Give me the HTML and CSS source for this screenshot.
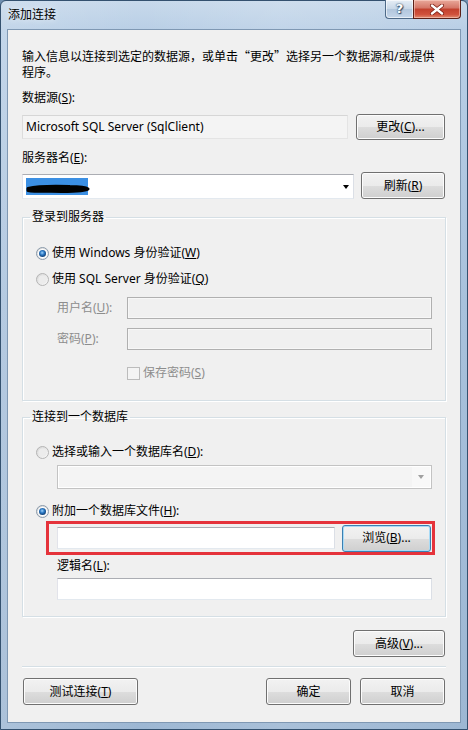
FILE: index.html
```html
<!DOCTYPE html>
<html lang="zh-CN">
<head>
    <meta charset="UTF-8">
    <title>添加连接</title>
    <link rel="stylesheet" href="styles.css">
</head>
<body>
    <!-- 整个对话框窗口 -->
    <div class="window">
        <!-- 标题栏 -->
        <div class="titlebar">
            <span class="title">添加连接</span>
            <div class="caption">
                <span class="cap-help">?</span>
                <span class="cap-close">
                    <svg width="16" height="11" viewBox="0 0 16 11">
                        <path d="M3 1.5 L13 9.5 M13 1.5 L3 9.5" stroke="#7a1d12" stroke-width="4" stroke-linecap="round"/>
                        <path d="M3 1.5 L13 9.5 M13 1.5 L3 9.5" stroke="#fff" stroke-width="2.4" stroke-linecap="round"/>
                    </svg>
                </span>
            </div>
        </div>

        <!-- 客户区 -->
        <div class="client">
            <svg class="defs" width="0" height="0">
                <defs>
                    <linearGradient id="rb-bg" x1="0" y1="0" x2="1" y2="1">
                        <stop offset="0" stop-color="#d6d6d6"/>
                        <stop offset="1" stop-color="#fbfbfb"/>
                    </linearGradient>
                    <radialGradient id="rb-dot" cx="0.45" cy="0.4" r="0.6">
                        <stop offset="0" stop-color="#9fd3fb"/>
                        <stop offset="0.5" stop-color="#2a78c4"/>
                        <stop offset="1" stop-color="#123f73"/>
                    </radialGradient>
                </defs>
            </svg>

            <p class="intro">输入信息以连接到选定的数据源，或单击<span class="cjk">“</span>更改<span class="cjk">”</span>选择另一个数据源和/或提供<br>程序。</p>

            <div class="label lbl-ds">数据源(<u>S</u>):</div>
            <div class="row row-ds">
                <div class="textbox readonly ds-box">Microsoft SQL Server (SqlClient)</div>
                <button class="btn btn-change">更改(<u>C</u>)...</button>
            </div>

            <div class="label lbl-server">服务器名(<u>E</u>):</div>
            <div class="row row-server">
                <div class="combo server-combo">
                    <svg class="scribble" width="68" height="20" viewBox="0 0 68 20">
                        <rect x="2" y="1" width="62" height="17" fill="#3b8fe3"/>
                        <path d="M4 11.5 C14 9 32 9 46 9.5 C56 9.5 62 10.5 64 12 C62 14 52 14.5 38 14.5 C24 14 12 15 4 13.5 Z" fill="#000" stroke="#000" stroke-width="3" stroke-linejoin="round"/>
                    </svg>
                    <span class="arrow"></span>
                </div>
                <button class="btn btn-refresh">刷新(<u>R</u>)</button>
            </div>

            <!-- 登录到服务器 -->
            <fieldset class="group group-login">
                <legend>登录到服务器</legend>
                <div class="group-body login-body">
                    <div class="radio-row r-win">
                        <svg class="radio" width="13" height="13" viewBox="0 0 13 13">
                            <circle cx="6.5" cy="6.5" r="6" fill="url(#rb-bg)" stroke="#8a9aaa"/>
                            <circle cx="6.5" cy="6.5" r="4.6" fill="#fff"/>
                            <circle cx="6.5" cy="6.5" r="3.5" fill="url(#rb-dot)"/>
                        </svg>
                        <span>使用 Windows 身份验证(<u>W</u>)</span>
                    </div>
                    <div class="radio-row r-sql">
                        <svg class="radio" width="13" height="13" viewBox="0 0 13 13">
                            <circle cx="6.5" cy="6.5" r="6" fill="url(#rb-bg)" stroke="#b4b4b4"/>
                            <circle cx="6.5" cy="6.5" r="4" fill="#ececec"/>
                        </svg>
                        <span>使用 SQL Server 身份验证(<u>Q</u>)</span>
                    </div>
                    <div class="field-row r-user">
                        <span class="field-label disabled">用户名(<u>U</u>):</span>
                        <div class="textbox disabled-box"></div>
                    </div>
                    <div class="field-row r-pwd">
                        <span class="field-label disabled">密码(<u>P</u>):</span>
                        <div class="textbox disabled-box"></div>
                    </div>
                    <div class="check-row">
                        <span class="checkbox"></span>
                        <span class="disabled">保存密码(<u>S</u>)</span>
                    </div>
                </div>
            </fieldset>

            <!-- 连接到一个数据库 -->
            <fieldset class="group group-db">
                <legend>连接到一个数据库</legend>
                <div class="group-body db-body">
                    <div class="radio-row r-dbname">
                        <svg class="radio" width="13" height="13" viewBox="0 0 13 13">
                            <circle cx="6.5" cy="6.5" r="6" fill="url(#rb-bg)" stroke="#b4b4b4"/>
                            <circle cx="6.5" cy="6.5" r="4" fill="#ececec"/>
                        </svg>
                        <span>选择或输入一个数据库名(<u>D</u>):</span>
                    </div>
                    <div class="combo db-combo">
                        <span class="drop-area"><span class="arrow grey"></span></span>
                    </div>
                    <div class="radio-row r-attach">
                        <svg class="radio" width="13" height="13" viewBox="0 0 13 13">
                            <circle cx="6.5" cy="6.5" r="6" fill="url(#rb-bg)" stroke="#8a9aaa"/>
                            <circle cx="6.5" cy="6.5" r="4.6" fill="#fff"/>
                            <circle cx="6.5" cy="6.5" r="3.5" fill="url(#rb-dot)"/>
                        </svg>
                        <span>附加一个数据库文件(<u>H</u>):</span>
                    </div>
                    <div class="highlight">
                        <div class="textbox file-box"></div>
                        <button class="btn btn-browse">浏览(<u>B</u>)...</button>
                    </div>
                    <div class="label lbl-logic">逻辑名(<u>L</u>):</div>
                    <div class="textbox logic-box"></div>
                </div>
            </fieldset>

            <div class="row row-adv">
                <button class="btn btn-adv">高级(<u>V</u>)...</button>
            </div>

            <div class="separator"></div>

            <div class="row row-bottom">
                <button class="btn btn-test">测试连接(<u>T</u>)</button>
                <button class="btn btn-ok">确定</button>
                <button class="btn btn-cancel">取消</button>
            </div>
        </div>
    </div>
</body>
</html>
```

FILE: styles.css
```css
*{
    margin: 0;
    padding: 0;
    box-sizing: border-box;
}
body{
    width: 468px;
    height: 730px;
    overflow: hidden;
    font: 12px/16px "Noto Sans", "Noto Sans CJK SC", sans-serif;
    color: #000;
    background: #6f8fb0;
}
u{
    text-decoration: underline;
    text-underline-offset: 1px;
}
/* 中文引号用全角字体 */
.cjk{
    font-family: "Noto Sans CJK SC", sans-serif;
}
/* 窗口外框 (Aero 玻璃) */
.window{
    height: 730px;
    display: flex;
    flex-direction: column;
    border: 1px solid #34516f;
    border-radius: 6px 6px 0 0;
    background: linear-gradient(90deg, rgba(255,255,255,0.15), rgba(255,255,255,0) 30%, rgba(255,255,255,0.12) 60%, rgba(255,255,255,0) 100%),
                linear-gradient(180deg, #c7d9eb 0, #b9cfe6 28px, #a8c1dc 300px, #9db7d3 730px);
}
.titlebar{
    height: 28px;
    display: flex;
    align-items: flex-start;
    justify-content: space-between;
}
.title{
    padding: 6px 0 0 7px;
    line-height: 16px;
    text-shadow: 0 0 6px rgba(255,255,255,0.9);
}
.caption{
    display: flex;
    margin-right: 6px;
    margin-top: -1px;
}
.cap-help, .cap-close{
    height: 19px;
    display: flex;
    align-items: center;
    justify-content: center;
    border: 1px solid #4e6a88;
    border-top: 0;
}
.cap-help{
    width: 28px;
    border-radius: 0 0 0 4px;
    border-right: 0;
    background: linear-gradient(180deg, #e6eef6 0, #c8d7e7 50%, #b2c6dc 51%, #c4d6ea 100%);
    box-shadow: inset 0 0 0 1px rgba(255,255,255,0.6);
    font: bold 13px/16px "DejaVu Sans", sans-serif;
    color: #fff;
    text-shadow: 0 0 1px #354f6b, 0 0 2px #354f6b, 1px 1px 1px #354f6b;
}
.cap-close{
    width: 48px;
    border-radius: 0 0 4px 0;
    border-color: #5b2018;
    background: linear-gradient(180deg, #e9a99b 0, #d47566 45%, #c2402d 50%, #d0513c 80%, #e08b70 100%);
    box-shadow: inset 0 0 0 1px rgba(255,220,210,0.5);
}
/* 客户区 */
.client{
    flex: 1;
    margin: 0 6px 6px 6px;
    border: 1px solid #7f98b3;
    background: #f0f0f0;
    padding: 18px 14px 0 14px;
}
.defs{
    position: absolute;
}
.intro{
    line-height: 16px;
}
.label{
    line-height: 16px;
}
.lbl-ds{
    margin-top: 9px;
}
.row{
    display: flex;
    align-items: center;
}
.row-ds{
    margin-top: 8px;
    height: 26px;
    gap: 8px;
}
.lbl-server{
    margin-top: 10px;
}
.row-server{
    margin-top: 6px;
    height: 27px;
    gap: 7px;
    align-items: flex-end;
}
/* 文本框 */
.textbox{
    background: #fff;
    border: 1px solid;
    border-color: #abadb3 #dbdfe6 #e3e9ef #e2e3ea;
    height: 22px;
}
.readonly{
    background: #f4f4f4;
    border-color: #d6d6d6 #e4e4e4 #e4e4e4 #dcdcdc;
    padding: 3px 0 0 3px;
}
.ds-box{
    width: 326px;
    height: 24px;
    line-height: 16px;
}
.disabled-box{
    background: #f0f0f0;
    border: 1px solid #b0b0b0;
    box-shadow: inset 0 0 0 1px #f7f7f7;
    width: 305px;
}
/* 组合框 */
.combo{
    position: relative;
    background: #fff;
    border: 1px solid;
    border-color: #abadb3 #dbdfe6 #e3e9ef #e2e3ea;
    display: flex;
    align-items: center;
}
.server-combo{
    width: 332px;
    height: 25px;
    justify-content: space-between;
    padding: 0 4px 0 0;
}
.scribble{
    display: block;
    margin-left: 1px;
    margin-top: 1px;
}
.arrow{
    width: 0;
    height: 0;
    border-left: 3.5px solid transparent;
    border-right: 3.5px solid transparent;
    border-top: 4px solid #000;
    margin-right: 0;
}
.arrow.grey{
    border-top-color: #a0a0a0;
}
.db-combo{
    margin-top: 5px;
    margin-left: 21px;
    width: 375px;
    height: 24px;
    background: #f4f4f4;
    border: 1px solid #c3c3c3;
    box-shadow: inset 0 0 0 1px #fff;
    justify-content: flex-end;
}
.drop-area{
    width: 18px;
    height: 20px;
    margin-right: 1px;
    background: #f8f8f8;
    display: flex;
    align-items: center;
    justify-content: center;
}
/* 按钮 */
.btn{
    font: inherit;
    color: #000;
    border: 1px solid #707070;
    border-radius: 3px;
    background: linear-gradient(180deg, #f2f2f2 0, #ebebeb 50%, #dddddd 51%, #cfcfcf 100%);
    box-shadow: inset 0 0 0 1px #fcfcfc;
    height: 27px;
    line-height: 16px;
    text-align: center;
}
.btn-change{
    width: 89px;
    height: 26px;
}
.btn-refresh{
    width: 84px;
}
.btn-browse{
    width: 89px;
    border-color: #3c7fb1;
    box-shadow: inset 0 0 0 1px #a9dbf6;
}
.btn-adv{
    width: 92px;
}
.btn-test{
    width: 115px;
}
.btn-ok, .btn-cancel{
    width: 85px;
}
/* 分组框 */
.group{
    border: 1px solid #d5dfe5;
    box-shadow: 1px 1px 0 #fff, inset 1px 1px 0 #fff;
    padding: 0;
    margin: 0;
    min-width: 0;
}
.group legend{
    margin-left: 7px;
    padding: 0 2px;
    line-height: 16px;
}
.group-login{
    margin-top: 10px;
}
.group-body{
    padding: 0 12px 0 13px;
}
.login-body{
    padding-top: 20px;
    padding-bottom: 19px;
}
.radio-row{
    display: flex;
    align-items: center;
    height: 16px;
}
.radio{
    display: block;
    margin-right: 3px;
}
.r-sql{
    margin-top: 10px;
}
.field-row{
    display: flex;
    align-items: center;
    padding-left: 21px;
}
.r-user{
    margin-top: 10px;
}
.r-pwd{
    margin-top: 9px;
}
.field-label{
    width: 70px;
}
.disabled{
    color: #8d8d8d;
}
.check-row{
    display: flex;
    align-items: center;
    height: 16px;
    margin-top: 15px;
    padding-left: 91px;
}
.checkbox{
    width: 13px;
    height: 13px;
    border: 1px solid #bcbcbc;
    background: #f4f4f4;
    margin-right: 3px;
}
.group-db{
    margin-top: 8px;
}
.db-body{
    padding-top: 19px;
    padding-bottom: 16px;
}
.r-dbname{
    margin-top: 0;
}
.r-attach{
    margin-top: 14px;
}
/* 红色标注框 */
.highlight{
    margin-top: 2px;
    margin-left: 10px;
    width: 389px;
    height: 34px;
    border: 3px solid #e5333b;
    display: flex;
    align-items: center;
    padding: 0 1px 0 8px;
    gap: 7px;
}
.file-box{
    width: 278px;
}
.lbl-logic{
    margin-top: 3px;
    margin-left: 21px;
}
.logic-box{
    margin-top: 4px;
    margin-left: 21px;
    width: 375px;
}
.row-adv{
    margin-top: 13px;
    justify-content: flex-end;
    padding-right: 1px;
}
.separator{
    margin-top: 9px;
    height: 2px;
    border-top: 1px solid #d5dfe5;
    border-bottom: 1px solid #fff;
}
.row-bottom{
    margin-top: 10px;
    padding: 0 1px;
    gap: 9px;
}
.btn-ok{
    margin-left: auto;
}
```
